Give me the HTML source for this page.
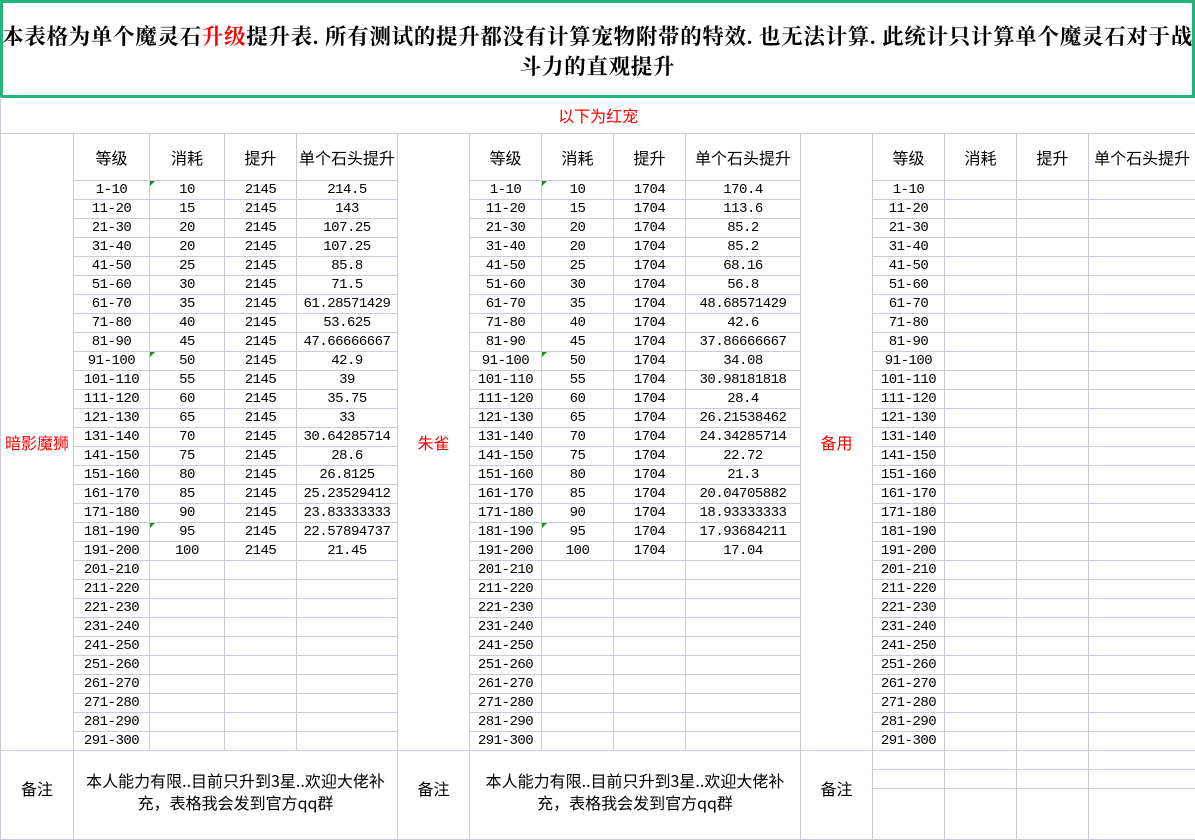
<!DOCTYPE html>
<html><head><meta charset="utf-8"><style>
body{margin:0;width:1195px;height:799px;overflow:hidden;background:#fff;font-family:"Liberation Mono","Noto Sans CJK SC",monospace;}
.title{position:absolute;left:0;top:0;width:1189px;height:92px;border:3px solid #21b57a;text-align:center;font-family:"Liberation Serif","Noto Serif CJK SC",serif;font-weight:bold;font-size:21.5px;line-height:30px;color:#000;}
.title div{position:absolute;left:-10px;right:-10px;top:19px;letter-spacing:0.7px}
.r{color:#f00}
table{position:absolute;left:0;top:97px;border-collapse:collapse;table-layout:fixed;width:1196px;}
td{border:1px solid #c8ccd8;padding:0;text-align:center;font-size:16px;height:18px;line-height:18px;white-space:nowrap;overflow:hidden;color:#000;font-family:"Noto Sans CJK SC","Liberation Sans",sans-serif;}
td.n{font-family:"Liberation Mono",monospace;font-size:14px;letter-spacing:-0.5px}
tr.h td{height:46px}
tr.top td{height:36px;color:#f00;border-top:none}
tr.b td{height:60px;vertical-align:top;white-space:normal}
.red{color:#f00}
.g{position:relative}
.g::before{content:"";position:absolute;left:0;top:0;border-top:5px solid #1a8a2a;border-right:5px solid transparent}
.sub{height:18px;border-bottom:1px solid #c8ccd8}
</style></head><body>
<div class="title"><div>本表格为单个魔灵石<span class="r">升级</span>提升表. 所有测试的提升都没有计算宠物附带的特效. 也无法计算. 此统计只计算单个魔灵石对于战<br>斗力的直观提升</div></div>
<table>
<colgroup><col style="width:73px"><col style="width:76px"><col style="width:75px"><col style="width:72px"><col style="width:101px"><col style="width:72px"><col style="width:72px"><col style="width:72px"><col style="width:72px"><col style="width:115px"><col style="width:72px"><col style="width:72px"><col style="width:72px"><col style="width:72px"><col style="width:107px"></colgroup>
<tr class="top"><td colspan="15">以下为红宠</td></tr>
<tr class="h"><td rowspan="31" class="red">暗影魔狮</td><td>等级</td><td>消耗</td><td>提升</td><td>单个石头提升</td><td rowspan="31" class="red">朱雀</td><td>等级</td><td>消耗</td><td>提升</td><td>单个石头提升</td><td rowspan="31" class="red">备用</td><td>等级</td><td>消耗</td><td>提升</td><td>单个石头提升</td></tr>
<tr><td class="n">1-10</td><td class="n g">10</td><td class="n">2145</td><td class="n">214.5</td><td class="n">1-10</td><td class="n g">10</td><td class="n">1704</td><td class="n">170.4</td><td class="n">1-10</td><td></td><td></td><td></td></tr>
<tr><td class="n">11-20</td><td class="n">15</td><td class="n">2145</td><td class="n">143</td><td class="n">11-20</td><td class="n">15</td><td class="n">1704</td><td class="n">113.6</td><td class="n">11-20</td><td></td><td></td><td></td></tr>
<tr><td class="n">21-30</td><td class="n">20</td><td class="n">2145</td><td class="n">107.25</td><td class="n">21-30</td><td class="n">20</td><td class="n">1704</td><td class="n">85.2</td><td class="n">21-30</td><td></td><td></td><td></td></tr>
<tr><td class="n">31-40</td><td class="n">20</td><td class="n">2145</td><td class="n">107.25</td><td class="n">31-40</td><td class="n">20</td><td class="n">1704</td><td class="n">85.2</td><td class="n">31-40</td><td></td><td></td><td></td></tr>
<tr><td class="n">41-50</td><td class="n">25</td><td class="n">2145</td><td class="n">85.8</td><td class="n">41-50</td><td class="n">25</td><td class="n">1704</td><td class="n">68.16</td><td class="n">41-50</td><td></td><td></td><td></td></tr>
<tr><td class="n">51-60</td><td class="n">30</td><td class="n">2145</td><td class="n">71.5</td><td class="n">51-60</td><td class="n">30</td><td class="n">1704</td><td class="n">56.8</td><td class="n">51-60</td><td></td><td></td><td></td></tr>
<tr><td class="n">61-70</td><td class="n">35</td><td class="n">2145</td><td class="n">61.28571429</td><td class="n">61-70</td><td class="n">35</td><td class="n">1704</td><td class="n">48.68571429</td><td class="n">61-70</td><td></td><td></td><td></td></tr>
<tr><td class="n">71-80</td><td class="n">40</td><td class="n">2145</td><td class="n">53.625</td><td class="n">71-80</td><td class="n">40</td><td class="n">1704</td><td class="n">42.6</td><td class="n">71-80</td><td></td><td></td><td></td></tr>
<tr><td class="n">81-90</td><td class="n">45</td><td class="n">2145</td><td class="n">47.66666667</td><td class="n">81-90</td><td class="n">45</td><td class="n">1704</td><td class="n">37.86666667</td><td class="n">81-90</td><td></td><td></td><td></td></tr>
<tr><td class="n">91-100</td><td class="n g">50</td><td class="n">2145</td><td class="n">42.9</td><td class="n">91-100</td><td class="n g">50</td><td class="n">1704</td><td class="n">34.08</td><td class="n">91-100</td><td></td><td></td><td></td></tr>
<tr><td class="n">101-110</td><td class="n">55</td><td class="n">2145</td><td class="n">39</td><td class="n">101-110</td><td class="n">55</td><td class="n">1704</td><td class="n">30.98181818</td><td class="n">101-110</td><td></td><td></td><td></td></tr>
<tr><td class="n">111-120</td><td class="n">60</td><td class="n">2145</td><td class="n">35.75</td><td class="n">111-120</td><td class="n">60</td><td class="n">1704</td><td class="n">28.4</td><td class="n">111-120</td><td></td><td></td><td></td></tr>
<tr><td class="n">121-130</td><td class="n">65</td><td class="n">2145</td><td class="n">33</td><td class="n">121-130</td><td class="n">65</td><td class="n">1704</td><td class="n">26.21538462</td><td class="n">121-130</td><td></td><td></td><td></td></tr>
<tr><td class="n">131-140</td><td class="n">70</td><td class="n">2145</td><td class="n">30.64285714</td><td class="n">131-140</td><td class="n">70</td><td class="n">1704</td><td class="n">24.34285714</td><td class="n">131-140</td><td></td><td></td><td></td></tr>
<tr><td class="n">141-150</td><td class="n">75</td><td class="n">2145</td><td class="n">28.6</td><td class="n">141-150</td><td class="n">75</td><td class="n">1704</td><td class="n">22.72</td><td class="n">141-150</td><td></td><td></td><td></td></tr>
<tr><td class="n">151-160</td><td class="n">80</td><td class="n">2145</td><td class="n">26.8125</td><td class="n">151-160</td><td class="n">80</td><td class="n">1704</td><td class="n">21.3</td><td class="n">151-160</td><td></td><td></td><td></td></tr>
<tr><td class="n">161-170</td><td class="n">85</td><td class="n">2145</td><td class="n">25.23529412</td><td class="n">161-170</td><td class="n">85</td><td class="n">1704</td><td class="n">20.04705882</td><td class="n">161-170</td><td></td><td></td><td></td></tr>
<tr><td class="n">171-180</td><td class="n">90</td><td class="n">2145</td><td class="n">23.83333333</td><td class="n">171-180</td><td class="n">90</td><td class="n">1704</td><td class="n">18.93333333</td><td class="n">171-180</td><td></td><td></td><td></td></tr>
<tr><td class="n">181-190</td><td class="n g">95</td><td class="n">2145</td><td class="n">22.57894737</td><td class="n">181-190</td><td class="n g">95</td><td class="n">1704</td><td class="n">17.93684211</td><td class="n">181-190</td><td></td><td></td><td></td></tr>
<tr><td class="n">191-200</td><td class="n">100</td><td class="n">2145</td><td class="n">21.45</td><td class="n">191-200</td><td class="n">100</td><td class="n">1704</td><td class="n">17.04</td><td class="n">191-200</td><td></td><td></td><td></td></tr>
<tr><td class="n">201-210</td><td></td><td></td><td></td><td class="n">201-210</td><td></td><td></td><td></td><td class="n">201-210</td><td></td><td></td><td></td></tr>
<tr><td class="n">211-220</td><td></td><td></td><td></td><td class="n">211-220</td><td></td><td></td><td></td><td class="n">211-220</td><td></td><td></td><td></td></tr>
<tr><td class="n">221-230</td><td></td><td></td><td></td><td class="n">221-230</td><td></td><td></td><td></td><td class="n">221-230</td><td></td><td></td><td></td></tr>
<tr><td class="n">231-240</td><td></td><td></td><td></td><td class="n">231-240</td><td></td><td></td><td></td><td class="n">231-240</td><td></td><td></td><td></td></tr>
<tr><td class="n">241-250</td><td></td><td></td><td></td><td class="n">241-250</td><td></td><td></td><td></td><td class="n">241-250</td><td></td><td></td><td></td></tr>
<tr><td class="n">251-260</td><td></td><td></td><td></td><td class="n">251-260</td><td></td><td></td><td></td><td class="n">251-260</td><td></td><td></td><td></td></tr>
<tr><td class="n">261-270</td><td></td><td></td><td></td><td class="n">261-270</td><td></td><td></td><td></td><td class="n">261-270</td><td></td><td></td><td></td></tr>
<tr><td class="n">271-280</td><td></td><td></td><td></td><td class="n">271-280</td><td></td><td></td><td></td><td class="n">271-280</td><td></td><td></td><td></td></tr>
<tr><td class="n">281-290</td><td></td><td></td><td></td><td class="n">281-290</td><td></td><td></td><td></td><td class="n">281-290</td><td></td><td></td><td></td></tr>
<tr><td class="n">291-300</td><td></td><td></td><td></td><td class="n">291-300</td><td></td><td></td><td></td><td class="n">291-300</td><td></td><td></td><td></td></tr>
<tr class="b"><td style="padding-top:28px">备注</td><td colspan="4" style="padding-top:18px;line-height:22px;font-size:16px">本人能力有限..目前只升到3星..欢迎大佬补充，表格我会发到官方qq群</td><td style="padding-top:28px">备注</td><td colspan="4" style="padding-top:18px;line-height:22px;font-size:16px">本人能力有限..目前只升到3星..欢迎大佬补充，表格我会发到官方qq群</td><td style="padding-top:28px">备注</td><td><div class="sub"></div><div class="sub"></div></td><td><div class="sub"></div><div class="sub"></div></td><td><div class="sub"></div><div class="sub"></div></td><td><div class="sub"></div><div class="sub"></div></td></tr>
</table>
</body></html>
